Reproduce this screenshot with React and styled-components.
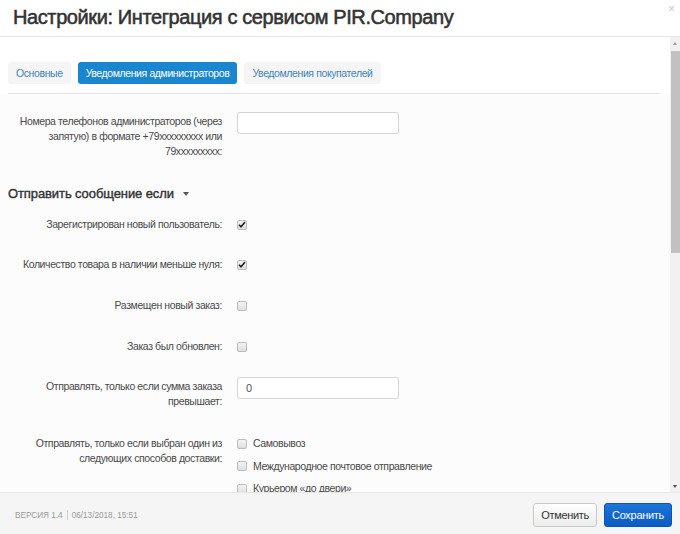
import React from "react";
import styled, { createGlobalStyle } from "styled-components";

const Global = createGlobalStyle`
  html, body { margin: 0; padding: 0; background: #fff; }
  body { font-family: "Liberation Sans", Arial, sans-serif; color: #333; }
  * { box-sizing: border-box; }
`;

const Modal = styled.div`
  width: 680px;
  height: 534px;
  display: flex;
  flex-direction: column;
  background: #fff;
  overflow: hidden;
`;

const Header = styled.div`
  position: relative;
  height: 37px;
  flex: none;
  border-bottom: 1px solid #e6e6e6;
  padding-left: 13px;
  display: flex;
  align-items: center;
`;

const Title = styled.h1`
  margin: 0;
  margin-top: -2px;
  font-size: 20px;
  font-weight: normal;
  letter-spacing: -0.4px;
  -webkit-text-stroke: 0.55px #333;
  color: #333;
  line-height: 24px;
`;

const Close = styled.span`
  position: absolute;
  right: 5px;
  top: 3px;
  font-size: 12px;
  color: #c8c8c8;
  line-height: 12px;
`;

const Body = styled.div`
  flex: 1;
  display: flex;
  min-height: 0;
`;

const Content = styled.div`
  flex: 1;
  padding: 0 10px 0 8px;
  background: linear-gradient(#fff 0, #fff 57px, #fcfcfc 58px);
  overflow: hidden;
`;

const Tabs = styled.div`
  display: flex;
  gap: 7px;
  margin-top: 25px;
  padding-bottom: 9px;
  border-bottom: 1px solid #e3e3e3;
`;

const Tab = styled.div`
  height: 22px;
  padding: 0 8px;
  border-radius: 3px;
  font-size: 10.5px;
  letter-spacing: -0.4px;
  line-height: 22px;
  background: ${(p) => (p.$active ? "#1a86cf" : "#f5f5f5")};
  color: ${(p) => (p.$active ? "#fff" : "#3f84bb")};
`;

const Row = styled.div`
  display: grid;
  grid-template-columns: 214px 1fr;
  column-gap: 15px;
  margin-top: ${(p) => p.$mt}px;
`;

const Label = styled.div`
  text-align: right;
  font-size: 10.5px;
  letter-spacing: -0.4px;
  line-height: 15px;
  color: #4a4a4a;
  padding-top: ${(p) => p.$pt || 0}px;
`;

const Control = styled.div`
  display: flex;
  align-items: flex-start;
`;

const Input = styled.div`
  width: 162px;
  height: 22px;
  border: 1px solid #d5d5d5;
  border-radius: 3px;
  background: #fff;
  font-size: 11px;
  color: #555;
  line-height: 20px;
  padding-left: 8px;
`;

const Heading = styled.div`
  margin-top: 25px;
  font-size: 13px;
  font-weight: normal;
  letter-spacing: -0.1px;
  -webkit-text-stroke: 0.4px #333;
  line-height: 20px;
  color: #333;
  display: flex;
  align-items: center;
`;

const Caret = styled.span`
  display: inline-block;
  margin-left: 9px;
  width: 0;
  height: 0;
  border-left: 3.5px solid transparent;
  border-right: 3.5px solid transparent;
  border-top: 4px solid #555;
`;

const Box = styled.span`
  flex: none;
  width: 10px;
  height: 10px;
  border: 1px solid #bdbdbd;
  border-radius: 2px;
  background: linear-gradient(#f4f4f4, #dedede);
  display: inline-flex;
  align-items: center;
  justify-content: center;
  margin-top: 2.5px;
`;

const Options = styled.div`
  display: flex;
  flex-direction: column;
  gap: 7.5px;
`;

const Option = styled.div`
  display: flex;
  align-items: flex-start;
  gap: 6px;
  font-size: 10.5px;
  letter-spacing: -0.4px;
  line-height: 15px;
  color: #4a4a4a;
`;

const Scrollbar = styled.div`
  width: 10px;
  flex: none;
  background: #f1f1f1;
  display: flex;
  flex-direction: column;
  align-items: center;
`;

const Arrow = styled.span`
  flex: none;
  width: 0;
  height: 0;
  margin: ${(p) => (p.$up ? "5px 0 6px" : "auto 0 4px")};
  border-left: 2.5px solid transparent;
  border-right: 2.5px solid transparent;
  ${(p) =>
    p.$up ? "border-bottom: 3px solid #a3a3a3;" : "border-top: 3px solid #505050;"}
`;

const Thumb = styled.div`
  width: 9px;
  margin-left: 1px;
  height: 202px;
  background: #c1c1c1;
`;

const Footer = styled.div`
  height: 42px;
  flex: none;
  background: #f5f5f5;
  border-top: 1px solid #e8e8e8;
  display: flex;
  align-items: center;
  padding: 3px 8px 0 15px;
`;

const Version = styled.div`
  font-size: 8.2px;
  color: #9a9a9a;
  display: flex;
  align-items: center;
  gap: 4px;
  flex: 1;
`;

const Sep = styled.span`
  width: 1px;
  height: 10px;
  background: #cfcfcf;
`;

const Button = styled.button`
  height: 24px;
  padding: 0 7px;
  margin-left: 7px;
  border-radius: 3px;
  font-family: "Liberation Sans", Arial, sans-serif;
  font-size: 11px;
  letter-spacing: -0.3px;
  cursor: pointer;
  border: 1px solid ${(p) => (p.$primary ? "#0b56b0" : "#c9c9c9")};
  color: ${(p) => (p.$primary ? "#fff" : "#333")};
  background: ${(p) =>
    p.$primary
      ? "linear-gradient(#1c74dc, #0b5bc2)"
      : "linear-gradient(#ffffff, #ececec)"};
`;

const Check = () => (
  <svg width="8" height="7" viewBox="0 0 8 7">
    <path d="M1 3.8 L3 5.8 L7 1" fill="none" stroke="#222" strokeWidth="1.6" />
  </svg>
);

const CheckRow = ({ label, checked, mt }) => (
  <Row $mt={mt}>
    <Label>{label}</Label>
    <Control>
      <Box>{checked && <Check />}</Box>
    </Control>
  </Row>
);

export default function App() {
  return (
    <>
      <Global />
      <Modal>
        <Header>
          <Title>Настройки: Интеграция с сервисом PIR.Company</Title>
          <Close>×</Close>
        </Header>
        <Body>
          <Content>
            <Tabs>
              <Tab>Основные</Tab>
              <Tab $active>Уведомления администраторов</Tab>
              <Tab>Уведомления покупателей</Tab>
            </Tabs>
            <Row $mt={18}>
              <Label $pt={2}>
                Номера телефонов администраторов (через запятую) в формате
                +79xxxxxxxxx или 79xxxxxxxxx:
              </Label>
              <Control>
                <Input />
              </Control>
            </Row>
            <Heading>
              Отправить сообщение если <Caret />
            </Heading>
            <CheckRow mt={13} checked label="Зарегистрирован новый пользователь:" />
            <CheckRow mt={25} checked label="Количество товара в наличии меньше нуля:" />
            <CheckRow mt={26} label="Размещен новый заказ:" />
            <CheckRow mt={26} label="Заказ был обновлен:" />
            <Row $mt={23}>
              <Label $pt={2}>Отправлять, только если сумма заказа превышает:</Label>
              <Control>
                <Input>0</Input>
              </Control>
            </Row>
            <Row $mt={27}>
              <Label>Отправлять, только если выбран один из следующих способов доставки:</Label>
              <Options>
                <Option>
                  <Box />
                  Самовывоз
                </Option>
                <Option>
                  <Box />
                  Международное почтовое отправление
                </Option>
                <Option>
                  <Box />
                  Курьером «до двери»
                </Option>
              </Options>
            </Row>
          </Content>
          <Scrollbar>
            <Arrow $up />
            <Thumb />
            <Arrow />
          </Scrollbar>
        </Body>
        <Footer>
          <Version>
            ВЕРСИЯ 1.4 <Sep /> 06/13/2018, 15:51
          </Version>
          <Button>Отменить</Button>
          <Button $primary>Сохранить</Button>
        </Footer>
      </Modal>
    </>
  );
}
